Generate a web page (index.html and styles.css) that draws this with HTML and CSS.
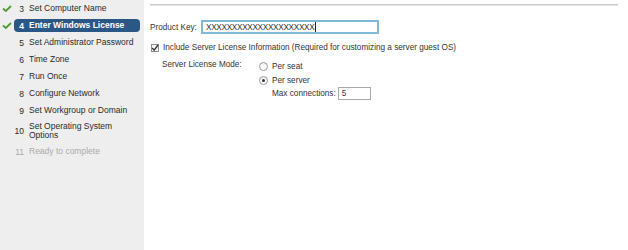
FILE: index.html
```html
<!doctype html>
<html lang="en">
<head>
    <meta charset="UTF-8">
    <title>Customization Specification - Windows License</title>
    <link rel="stylesheet" href="styles.css">
</head>
<body>

<div class="wizard">
    <div class="sidebar">
        <div class="step done">
            <span class="mark"><svg width="10" height="7" viewBox="0 0 10 7"><path d="M1 3.5 L3.8 6 L9 1" fill="none" stroke="#4f9a34" stroke-width="1.8"/></svg></span>
            <div class="step-body"><span class="num">3</span><span class="label">Set Computer Name</span></div>
        </div>
        <div class="step done">
            <span class="mark"><svg width="10" height="7" viewBox="0 0 10 7"><path d="M1 3.5 L3.8 6 L9 1" fill="none" stroke="#4f9a34" stroke-width="1.8"/></svg></span>
            <div class="step-body current"><span class="num">4</span><span class="label">Enter Windows License</span></div>
        </div>
        <div class="step">
            <span class="mark"></span>
            <div class="step-body"><span class="num">5</span><span class="label">Set Administrator Password</span></div>
        </div>
        <div class="step">
            <span class="mark"></span>
            <div class="step-body"><span class="num">6</span><span class="label">Time Zone</span></div>
        </div>
        <div class="step">
            <span class="mark"></span>
            <div class="step-body"><span class="num">7</span><span class="label">Run Once</span></div>
        </div>
        <div class="step">
            <span class="mark"></span>
            <div class="step-body"><span class="num">8</span><span class="label">Configure Network</span></div>
        </div>
        <div class="step">
            <span class="mark"></span>
            <div class="step-body"><span class="num">9</span><span class="label">Set Workgroup or Domain</span></div>
        </div>
        <div class="step two-line">
            <span class="mark"></span>
            <div class="step-body"><span class="num">10</span><span class="label">Set Operating System<br>Options</span></div>
        </div>
        <div class="step disabled">
            <span class="mark"></span>
            <div class="step-body"><span class="num">11</span><span class="label">Ready to complete</span></div>
        </div>
    </div>

    <div class="content">
        <div class="rule"></div>

        <div class="key-row">
            <label class="key-label" for="productKey">Product Key:</label>
            <div class="text-field focused" id="productKey">XXXXXXXXXXXXXXXXXXXXX<span class="caret"></span></div>
        </div>

        <div class="check-row">
            <span class="checkbox checked"><svg width="8" height="8" viewBox="0 0 8 8"><path d="M1.2 4 L3.2 6.2 L7 1" fill="none" stroke="#333" stroke-width="1.3"/></svg></span>
            <span>Include Server License Information (Required for customizing a server guest OS)</span>
        </div>

        <div class="mode-row">
            <div class="mode-label">Server License Mode:</div>
            <div class="mode-options">
                <div class="radio-row"><span class="radio"></span><span>Per seat</span></div>
                <div class="radio-row"><span class="radio selected"></span><span>Per server</span></div>
                <div class="conn-row">
                    <span>Max connections:</span>
                    <div class="text-field small">5</div>
                </div>
            </div>
        </div>
    </div>
</div>

</body>
</html>
```

FILE: styles.css
```css
body {
    margin: 0;
    font-family: "Liberation Sans", Arial, sans-serif;
    color: #333;
    background: #fff;
}

.wizard {
    display: flex;
    height: 250px;
}

/* left steps list */
.sidebar {
    width: 144px;
    background: #eeeeee;
    font-size: 8.5px;
    color: #2a2a2a;
}

.step {
    display: flex;
    align-items: center;
    height: 17px;
}

.step.two-line {
    height: 24px;
}

.mark {
    width: 14px;
    display: flex;
    justify-content: center;
}

.step-body {
    width: 126px;
    display: flex;
    align-items: center;
    min-height: 12px;
    border-radius: 4px;
}

.step-body.current {
    background: #2b5786;
    color: #fff;
    font-weight: bold;
    height: 13px;
}

.num {
    width: 10px;
    text-align: right;
    flex-shrink: 0;
}

.label {
    margin-left: 5px;
    line-height: 9px;
}

.step.disabled {
    color: #aaa;
}

/* right form */
.content {
    flex: 1;
    padding: 4px 10px 0 6px;
    font-size: 8.2px;
}

.rule {
    height: 0;
    border-top: 1px solid #c9c9c9;
    border-bottom: 1px solid #e4e4e4;
}

.key-row {
    display: flex;
    align-items: center;
    margin-top: 14px;
}

.key-label {
    width: 51px;
}

.text-field {
    box-sizing: border-box;
    border: 1px solid #a9a9a9;
    background: #fff;
    padding: 0 3px;
    display: flex;
    align-items: center;
}

.text-field.focused {
    width: 178px;
    height: 14px;
    border: 2px solid #7ebad6;
    letter-spacing: -0.3px;
}

.caret {
    display: inline-block;
    width: 1px;
    height: 10px;
    background: #222;
    margin-left: 1px;
}

.text-field.small {
    width: 33px;
    height: 13px;
    margin-left: 2px;
}

.check-row {
    display: flex;
    align-items: center;
    margin-top: 9px;
    gap: 4px;
    padding-left: 1px;
}

.checkbox {
    box-sizing: border-box;
    width: 8px;
    height: 8px;
    border: 1px solid #8c8c8c;
    background: #f6f6f6;
    position: relative;
}

.checkbox svg {
    position: absolute;
    left: -1px;
    top: -1px;
}

.mode-row {
    display: flex;
    margin-top: 7px;
    padding-left: 12px;
}

.mode-label {
    width: 97px;
    line-height: 12px;
}

.radio-row {
    display: flex;
    align-items: center;
    height: 14px;
    gap: 4px;
}

.radio {
    box-sizing: border-box;
    width: 9px;
    height: 9px;
    border: 1px solid #999;
    border-radius: 50%;
    background: linear-gradient(#f0f0f0, #fff);
    display: flex;
    align-items: center;
    justify-content: center;
}

.radio.selected::after {
    content: "";
    width: 3px;
    height: 3px;
    border-radius: 50%;
    background: #333;
}

.conn-row {
    display: flex;
    align-items: center;
    padding-left: 13px;
}
```
